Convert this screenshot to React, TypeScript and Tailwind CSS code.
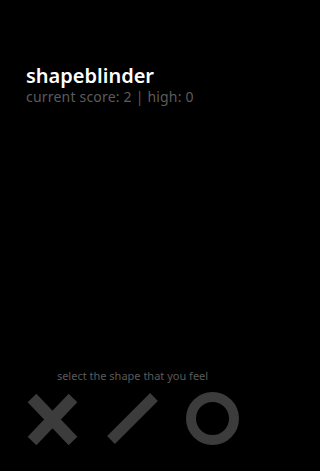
export default function App() {
  return (
    <div className="w-full min-h-screen bg-black">
      <div className="w-[265px] h-[471px] bg-black flex flex-col" style={{ fontFamily: '"Noto Sans", sans-serif' }}>
        <div className="pt-[64px] px-[26px]">
          <div className="text-white text-[20px] leading-[24px] font-semibold">shapeblinder</div>
          <div className="text-[#5c5c5c] text-[14px] leading-[18px] tracking-[0.2px]">current score: 2 | high: 0</div>
        </div>
        <div className="flex-1" />
        <div className="text-center text-[#5a5a5a] text-[11px] leading-[14px] mb-[9px]">select the shape that you feel</div>
        <div className="flex justify-between px-[26px] pb-[24px]">
          <svg width="53" height="55" viewBox="0 0 53 55">
            <path d="M6 6 L47 49 M47 6 L6 49" stroke="#3c3c3c" strokeWidth="12" />
          </svg>
          <svg width="53" height="53" viewBox="0 0 53 53">
            <path d="M48 5 L5 48" stroke="#3c3c3c" strokeWidth="11" />
          </svg>
          <svg width="53" height="53" viewBox="0 0 53 53">
            <circle cx="26.5" cy="26.5" r="21.5" fill="none" stroke="#3c3c3c" strokeWidth="10" />
          </svg>
        </div>
      </div>
    </div>
  );
}
